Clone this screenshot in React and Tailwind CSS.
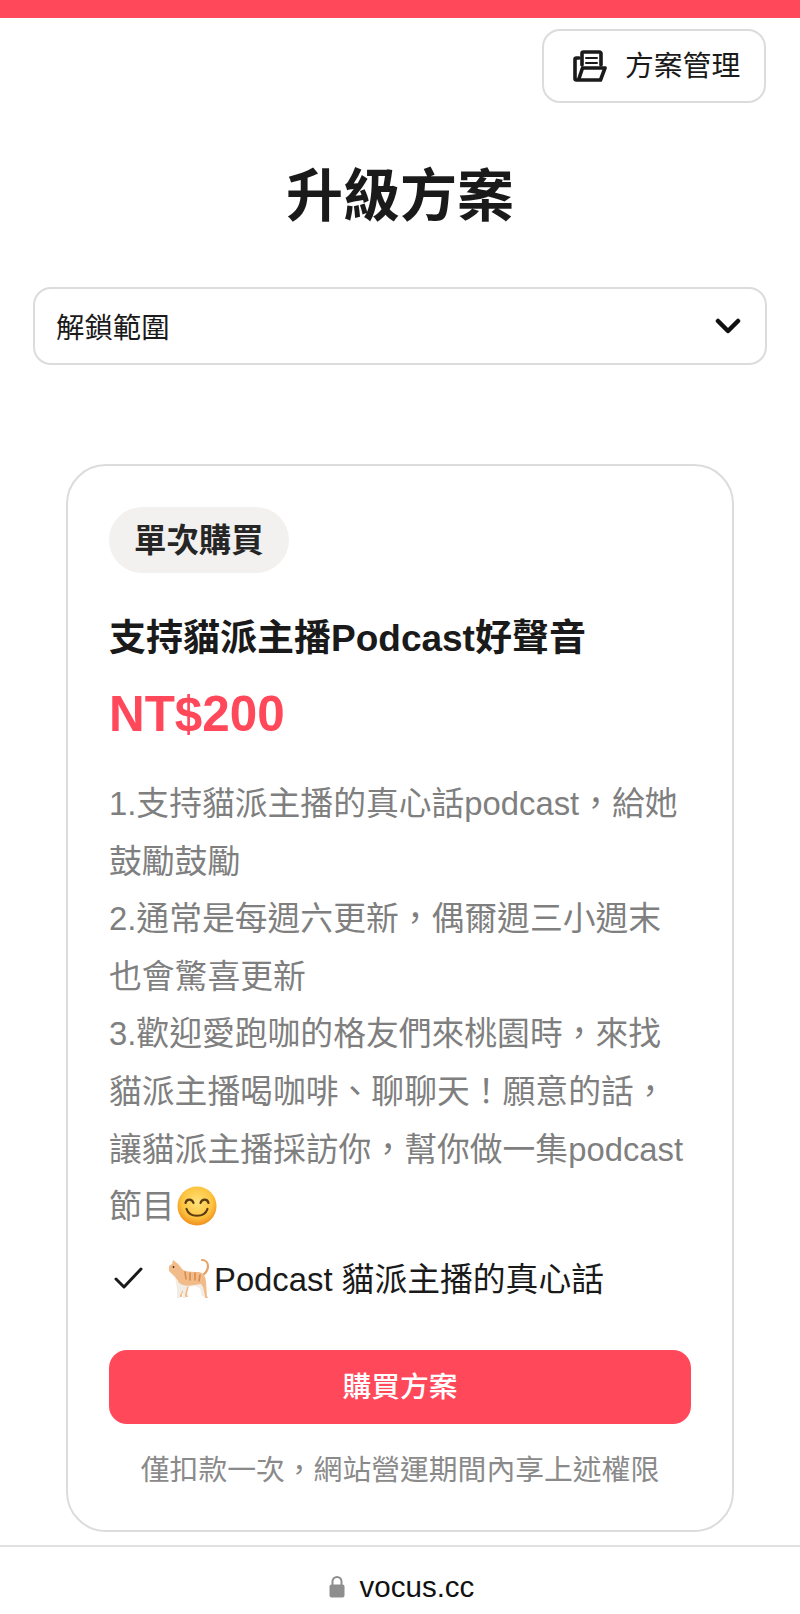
const F = '"Liberation Sans", "Noto Sans CJK TC", sans-serif';
const C = "\uFF0C";
const X = "\uFF01";

function FolderIcon() {
  return (
    <svg width="34" height="32" viewBox="0 0 34 32" fill="none" stroke="#1a1a1a" strokeWidth="3.6" strokeLinejoin="round" strokeLinecap="round">
      <path d="M9 15V3.500A1.500 1.500 0 0 1 10.500 2h16A1.500 1.500 0 0 1 28 3.500V15" />
      <path d="M13 8h11M13 13h11" strokeWidth="2" />
      <path d="M6 8H3.500A1.500 1.500 0 0 0 2 9.500v19A1.500 1.500 0 0 0 3.500 30h24L32 18H9.500L5.500 30" />
    </svg>
  );
}

function Smile() {
  return (
    <svg width="40" height="40" viewBox="0 0 40 40">
      <defs>
        <radialGradient id="sm" cx="50%" cy="40%" r="60%">
          <stop offset="0%" stopColor="#ffe27a" />
          <stop offset="65%" stopColor="#fdc43f" />
          <stop offset="100%" stopColor="#ef8f1e" />
        </radialGradient>
      </defs>
      <circle cx="20" cy="20" r="19.500" fill="url(#sm)" />
      <path d="M8.500 17c1-4.500 6.500-4.500 8 0M23.500 17c1.500-4.500 7-4.500 8 0" fill="none" stroke="#5b3a12" strokeWidth="2.200" strokeLinecap="round" />
      <path d="M9.500 23c3 9 18 9 21 0" fill="none" stroke="#5b3a12" strokeWidth="2.200" strokeLinecap="round" />
    </svg>
  );
}

function Cat() {
  return (
    <svg width="44" height="42" viewBox="0 0 44 42">
      <path d="M34 19c4-2 7-5 7-10 0-3-2-6-6-6" fill="none" stroke="#e5a468" strokeWidth="2.200" strokeLinecap="round" />
      <path d="M2 9l3-2 1-4 4 3 2 2 4 5c5 2 11 2 16 2 5 1 7 5 7 10l1 14 1 2-3 0-2-9-5-4-9 1-2 8 1 3-3 0 0-8-3 5 0 3-3 0 0-8-1-8-4-5-5-5z" fill="#f2bc8a" />
      <path d="M7 17c2 6 4 9 9 11 3 1 8 1 11 0l7-1 2 3 2 9-3 0-2-8-5-2-8 1-2 8 1 3-3 0 0-8-3 5 0 3-3 0 0-8-1-8z" fill="#f1ece6" />
      <path d="M18 15l1 7M23 16l0 7M28 16l0 7M33 18l-1 6" stroke="#d98b4e" strokeWidth="1.600" strokeLinecap="round" />
      <circle cx="6.500" cy="10" r="0.900" fill="#3a2a1c" />
    </svg>
  );
}

export default function App() {
  return (
    <div className="w-[800px] bg-white" style={{ fontFamily: F }}>
      <div className="h-[18px] bg-[#ff485a]" />
      <div className="flex justify-end pt-[11px] pr-[34px]">
        <button className="flex h-[74px] w-[224px] items-center gap-[18px] rounded-[18px] border-2 border-[#dcdcdc] bg-white pl-[29px] text-[28.800px] text-[#1a1a1a]">
          <FolderIcon />
          <span className="pt-[2px]">方案管理</span>
        </button>
      </div>
      <h1 className="mt-[58px] text-center text-[57px] leading-[70px] font-bold text-[#1a1a1a]">升級方案</h1>
      <div className="mx-[33px] mt-[56px] flex h-[78px] items-center justify-between rounded-[18px] border-2 border-[#dcdcdc] px-[21px] text-[28.400px] text-[#1a1a1a]">
        <span className="pt-[4px]">解鎖範圍</span>
        <svg width="26" height="16" viewBox="0 0 26 16" fill="none" stroke="#111" strokeWidth="4.500" strokeLinecap="round" strokeLinejoin="round" className="mr-[3px]">
          <path d="M3 3l10 10L23 3" />
        </svg>
      </div>
      <div className="mx-[66px] mt-[99px] rounded-[40px] border-2 border-[#dcdcdc] px-[41px] pt-[41px] pb-[35px]">
        <span className="inline-flex h-[66px] items-center rounded-[33px] bg-[#f2f1f0] px-[25px] pt-[3px] text-[32.400px] font-bold text-[#262626]">單次購買</span>
        <h2 className="mt-[41px] text-[37px] leading-[50px] font-bold text-[#1a1a1a]">支持貓派主播Podcast好聲音</h2>
        <div className="mt-[18px] text-[49.400px] leading-[64px] font-bold text-[#ff485a]">NT$200</div>
        <p className="mt-[29px] text-[32.800px] leading-[57.600px] text-[#7f7f7f]">
          1.支持貓派主播的真心話podcast{C}給她鼓勵鼓勵
          <br />
          2.通常是每週六更新{C}偶爾週三小週末也會驚喜更新
          <br />
          3.歡迎愛跑咖的格友們來桃園時{C}來找貓派主播喝咖啡、聊聊天{X}願意的話{C}讓貓派主播採訪你{C}幫你做一集podcast
          <br />
          節目
          <span className="ml-[2px] inline-block align-[-8px]"><Smile /></span>
        </p>
        <div className="mt-[12px] flex items-center text-[32.800px] leading-[58px] text-[#1a1a1a]">
          <svg width="30" height="24" viewBox="0 0 30 24" fill="none" stroke="#1a1a1a" strokeWidth="3" strokeLinecap="round" strokeLinejoin="round" className="ml-[5px]">
            <path d="M2 13l8 8L27 3" />
          </svg>
          <span className="ml-[23px] flex items-center">
            <Cat />
            <span className="pt-[3px] pl-[3px]">Podcast 貓派主播的真心話</span>
          </span>
        </div>
        <button className="mt-[41px] flex h-[74px] w-full items-center justify-center rounded-[18px] bg-[#ff485a] pt-[2px] text-[28.800px] font-medium text-white">購買方案</button>
        <p className="mt-[21px] text-center text-[28.800px] leading-[50px] text-[#8a8a8a]">僅扣款一次{C}網站營運期間內享上述權限</p>
      </div>
      <div className="mt-[13px] flex h-[68px] items-center justify-center gap-[15px] border-t-2 border-[#e0e0e0] bg-white pt-[14px] pl-[3px] text-[29.500px] text-[#111]">
        <svg width="16" height="23" viewBox="0 0 16 23">
          <path d="M3.500 10V6.500a4.500 4.500 0 0 1 9 0V10" fill="none" stroke="#8e8e8e" strokeWidth="2" />
          <rect x="0.500" y="9.500" width="15" height="13" rx="2" fill="#8e8e8e" />
        </svg>
        <span>vocus.cc</span>
      </div>
    </div>
  );
}
